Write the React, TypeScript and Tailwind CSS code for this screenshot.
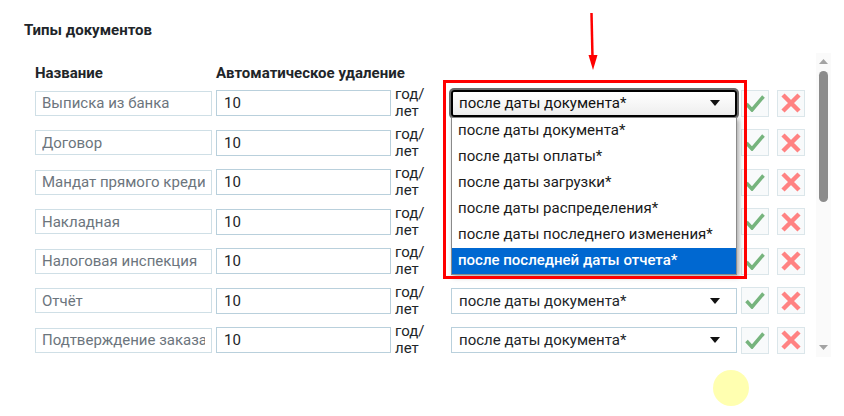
import React from 'react';

const rows = ['Выписка из банка', 'Договор', 'Мандат прямого кредита', 'Накладная', 'Налоговая инспекция', 'Отчёт', 'Подтверждение заказа'];
const options = ['после даты документа*', 'после даты оплаты*', 'после даты загрузки*', 'после даты распределения*', 'после даты последнего изменения*'];

const Caret = () => (
  <svg width="10" height="6" viewBox="0 0 10 6" className="shrink-0">
    <path d="M0 0H10L5 6Z" fill="#111" />
  </svg>
);

export default function App() {
  return (
    <div className="relative w-[844px] h-[416px] overflow-hidden bg-white text-[#212529] font-['Roboto',sans-serif]">
      <div className="pl-[24px] pt-[22px]">
        <h3 className="text-[15px] leading-[16px] font-bold">Типы документов</h3>

        <div className="flex mt-[15px]">
          <div className="pl-[11px] pt-[11px] w-[792px]">
            {/* Header */}
            <div className="flex h-[17px] text-[15px] leading-[18px] font-bold">
              <div className="w-[181px]">Название</div>
              <div>Автоматическое удаление</div>
            </div>

            {/* Rows */}
            <div className="mt-[2.25px]">
              {rows.map((name, i) => (
                <div key={name} className="flex items-center h-[39.5px]">
                  <input readOnly value={name} className="w-[177px] h-[25px] px-[6px] border border-[#cfdfe6] text-[15px] text-[#6c757d] outline-none" />
                  <input readOnly value="10" className="ml-[4px] w-[175px] h-[26px] px-[7px] border border-[#b9d0dc] text-[15px] text-[#212529] outline-none" />
                  <div className="ml-[4px] w-[52px] text-[15px] leading-[17px]">год/<br />лет</div>
                  {i === 0 ? (
                    <div className="relative z-10 ml-[4px] w-[286px] h-[27px] flex items-center justify-between pl-[6px] pr-[15px] rounded-[3px] border-2 border-black bg-gradient-to-b from-white to-[#eeeeee] text-[15px] text-[#111] shadow-[0_0_0_2px_#6b6b6b]">
                      <span>после даты документа*</span>
                      <Caret />
                      {/* Open list */}
                      <div className="absolute left-[-2px] top-[25px] w-[286px] bg-white border border-[#8a8a8a] shadow-[2px_2px_5px_rgba(0,0,0,0.35)] text-[15px] text-[#1a1a1a]">
                        {options.map((o) => (
                          <div key={o} className="h-[26px] leading-[25px] pl-[6px]">{o}</div>
                        ))}
                        <div className="h-[26px] leading-[25px] pl-[6px] bg-[#0068d1] text-white font-medium">после последней даты отчета*</div>
                      </div>
                    </div>
                  ) : (
                    <div className="ml-[4px] w-[286px] h-[26px] flex items-center justify-between pl-[7px] pr-[16px] border border-[#b9d0dc] text-[15px]">
                      {i > 4 && <span className="pt-px">после даты документа*</span>}
                      {i > 4 && <Caret />}
                    </div>
                  )}
                  <button className="ml-[4px] w-[28px] h-[27px] flex items-center justify-center bg-[#f8fafb] border border-[#dbe6ea]">
                    <svg width="20" height="17" viewBox="0 0 20 17" fill="none">
                      <path d="M1.5 9L7 15L18.5 1.5" stroke="#76b47d" strokeWidth="3.5" />
                    </svg>
                  </button>
                  <button className="ml-[8px] w-[28px] h-[27px] flex items-center justify-center bg-[#f8fafb] border border-[#dbe6ea]">
                    <svg width="20" height="20" viewBox="0 0 20 20" fill="none">
                      <path d="M2 2L18 18M18 2L2 18" stroke="#ff8282" strokeWidth="4.5" />
                    </svg>
                  </button>
                </div>
              ))}
            </div>
          </div>

          {/* Scrollbar */}
          <div className="w-[15px] h-[304px] bg-[#fafafa] flex flex-col items-center">
            <svg width="9" height="5" viewBox="0 0 9 5" className="mt-[6px]">
              <path d="M0 5H9L4.5 0Z" fill="#a3a3a3" />
            </svg>
            <div className="mt-[7px] w-[9px] h-[131px] rounded-full bg-[#8c8c8c]" />
            <svg width="9" height="5" viewBox="0 0 9 5" className="mt-[143px]">
              <path d="M0 0H9L4.5 5Z" fill="#a3a3a3" />
            </svg>
          </div>
        </div>
      </div>

      {/* Annotations */}
      <div className="absolute z-20 left-[443px] top-[80px] w-[304px] h-[199px] border-[3px] border-[#ff0000]" />
      <svg className="absolute left-[583px] top-[12px]" width="18" height="60" viewBox="0 0 18 60">
        <path d="M8.5 1L9.5 46" stroke="#ff0000" strokeWidth="2.5" fill="none" />
        <path d="M5.5 43H14.5L10 58Z" fill="#ff0000" />
      </svg>
      <div className="absolute left-[713px] top-[370px] w-[36px] h-[36px] rounded-full bg-[#ffffb0]" />
    </div>
  );
}
